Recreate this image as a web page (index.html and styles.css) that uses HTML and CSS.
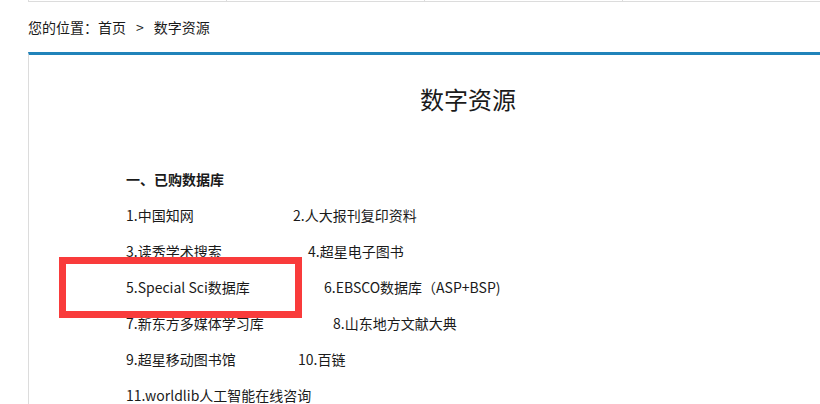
FILE: index.html
```html
<!DOCTYPE html>
<html lang="zh-CN">

<head>
    <meta charset="UTF-8">
    <meta name="viewport" content="width=device-width, initial-scale=1.0">
    <title>数字资源</title>
    <link rel="stylesheet" href="styles.css">
</head>

<body>
    <div class="page">
        <div class="topnav">
            <div class="navcell"></div>
            <div class="navcell"></div>
            <div class="navcell"></div>
            <div class="navcell"></div>
        </div>

        <div class="crumbs">
            您的位置：<a href="#">首页</a><span class="sep">&gt;</span><a href="#">数字资源</a>
        </div>

        <div class="content">
            <h2 class="title">数字资源</h2>

            <div class="list">
                <p class="heading">一、已购数据库</p>
                <p class="row"><span class="item w1">1.中国知网</span><span class="item">2.人大报刊复印资料</span></p>
                <p class="row"><span class="item w2">3.读秀学术搜索</span><span class="item">4.超星电子图书</span></p>
                <p class="row"><span class="item w3">5.Special Sci数据库</span><span class="item">6.EBSCO数据库（ASP+BSP)</span></p>
                <p class="row"><span class="item w4">7.新东方多媒体学习库</span><span class="item">8.山东地方文献大典</span></p>
                <p class="row"><span class="item w5">9.超星移动图书馆</span><span class="item">10.百链</span></p>
                <p class="row"><span class="item">11.worldlib人工智能在线咨询</span></p>
            </div>
        </div>

        <!-- highlight mark drawn over the screenshot -->
        <div class="mark"></div>
    </div>
</body>

</html>
```

FILE: styles.css
```css
body {
    margin: 0;
    padding: 0;
    background: #fff;
    font-family: "Noto Sans CJK SC", "Noto Sans", sans-serif;
    color: #1a1a1a;
    font-size: 14px;
}

.page {
    position: relative;
    height: 404px;
    overflow: hidden;
}

.topnav {
    display: flex;
    margin-left: 28px;
    height: 1px;
    border-bottom: 1px solid #dcdcdc;
}

.navcell {
    width: 236.5px;
    border-left: 1px solid #dcdcdc;
    box-sizing: border-box;
}

.crumbs {
    padding-left: 28px;
    height: 50px;
    line-height: 50px;
}

.crumbs a {
    color: #1a1a1a;
    text-decoration: none;
}

.crumbs .sep {
    margin: 0 10px;
}

.content {
    margin-left: 28px;
    border-left: 1px solid #dcdcdc;
    border-top: 3px solid #2083ba;
    height: 400px;
}

.title {
    margin: 29px 0 0;
    padding-left: 87px;
    text-align: center;
    font-size: 24px;
    font-weight: normal;
    line-height: 30px;
}

.list {
    margin-top: 47px;
    padding-left: 97px;
}

.list p {
    margin: 0;
    height: 36px;
    line-height: 36px;
    white-space: nowrap;
}

.heading {
    font-weight: bold;
}

.item {
    display: inline-block;
}

.w1 { width: 167px; }
.w2 { width: 182px; }
.w3 { width: 198px; }
.w4 { width: 207px; }
.w5 { width: 172px; }

.mark {
    position: absolute;
    left: 59px;
    top: 257px;
    width: 229px;
    height: 47px;
    border: 7px solid #f93b3b;
}
```
